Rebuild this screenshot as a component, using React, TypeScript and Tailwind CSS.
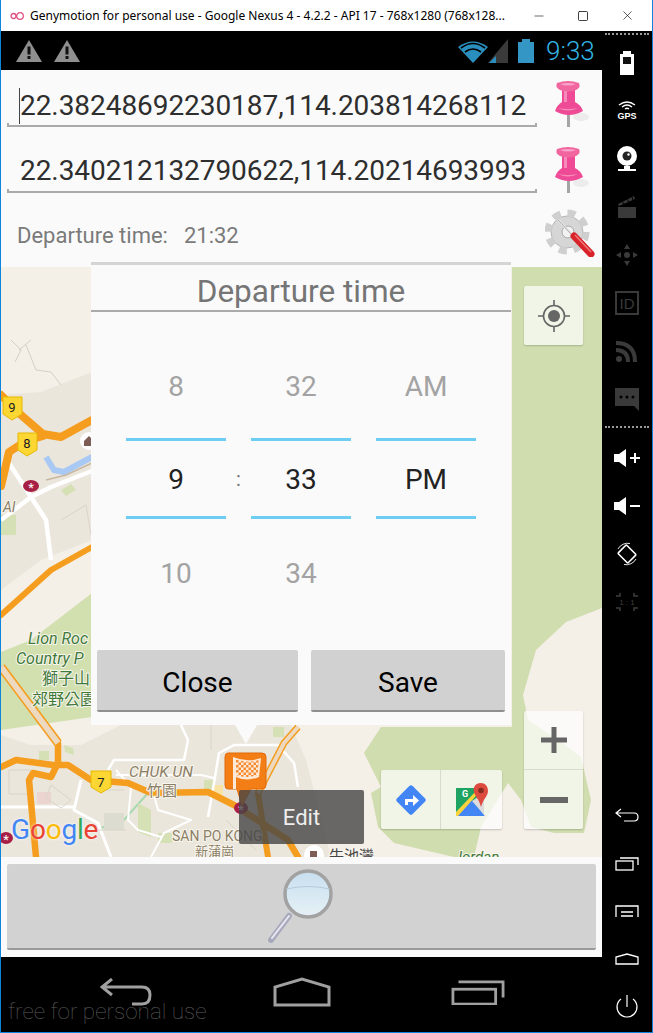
import { Minus, Square, X } from "lucide-react";

const ROBOTO = "font-['Roboto',sans-serif]";

function Warning({ className }: { className?: string }) {
  return (
    <svg viewBox="0 0 26 22" className={className}>
      <path d="M13 0 L26 22 H0 Z" fill="#8f8f8f" />
      <rect x="11.5" y="6.5" width="3" height="8" fill="#111" />
      <rect x="11.5" y="16" width="3" height="3" fill="#111" />
    </svg>
  );
}

function Pin() {
  return (
    <svg viewBox="0 0 40 50" className="w-[40px] h-[50px] shrink-0 blur-[0.4px]">
      <ellipse cx="28" cy="37" rx="8" ry="4" fill="#ececec" />
      <rect x="14" y="33" width="3" height="14" fill="#a5a5a5" />
      <path d="M9 10 H22 V22 Q28 25 30 31 Q16 39 2 31 Q4 25 9 22 Z" fill="#ee4a95" />
      <path d="M4 3 Q15 -1 26 3 Q28 8 23 10 Q15 13 7 10 Q2 8 4 3 Z" fill="#f2669f" />
      <path d="M7 4 Q15 2 23 4 Q15 7 7 4 Z" fill="#f8a3c8" />
      <path d="M11 11 H14 V22 H11 Z M5 28 Q15 33 25 28 Q15 30 5 28 Z" fill="#f68bb9" />
    </svg>
  );
}

function Gear() {
  return (
    <svg viewBox="0 0 50 50" className="w-[50px] h-[50px] blur-[0.4px]">
      <circle cx="22" cy="25" r="16" fill="#d6d6d6" stroke="#b5b5b5" />
      <circle cx="22" cy="25" r="19" fill="none" stroke="#cfcfcf" strokeWidth="7" strokeDasharray="8 6.9" />
      <circle cx="23" cy="25" r="6" fill="#f1f1f1" stroke="#aaa" />
      <path d="M13 13 L29 30" stroke="#e9e9e9" strokeWidth="2.5" />
      <path d="M13 13 L29 30" stroke="#8a8a8a" strokeWidth="0.7" />
      <path d="M29 29 L46 47" stroke="#d8232a" strokeWidth="7" strokeLinecap="round" />
      <path d="M30 28 L46 45" stroke="#f07a7a" strokeWidth="1.5" />
    </svg>
  );
}

function MapArt() {
  return (
    <svg viewBox="0 267 601 590" className="w-[601px] h-[590px] block">
      <defs>
        <pattern id="checker" width="5" height="5" patternUnits="userSpaceOnUse">
          <rect width="2.5" height="2.5" fill="#f58a2e" />
          <rect x="2.5" y="2.5" width="2.5" height="2.5" fill="#f58a2e" />
        </pattern>
      </defs>
      <rect x="0" y="267" width="601" height="590" fill="#f4efe7" />
      {/* parks */}
      <path d="M511 267 H601 V608 L565 622 L535 650 L522 695 L527 720 L553 737 L580 757 L590 800 L583 833 L553 833 L530 827 L520 800 L507 783 L480 827 L473 857 H453 L393 843 L377 827 L370 793 L380 787 L363 753 L380 727 H511 Z" fill="#d0ddaf" />
      <path d="M0 652 L30 640 L91 593 V717 L0 730 Z" fill="#d2e0b0" />
      {/* built up land */}
      <path d="M0 395 L40 392 L91 372 V540 L40 560 L0 590 Z" fill="#ebe6dc" />
      <path d="M0 735 L30 745 H80 L120 725 H290 L305 760 L330 857 H0 Z" fill="#ebe6dc" />
      <path d="M10 340 L20 350 L14 362 M25 345 L35 370 L50 372 L60 385 M30 340 L18 350" fill="none" stroke="#d5d0c6" />
      <path d="M45 457 L53 470 L63 472 L91 457" fill="none" stroke="#a9c9f5" strokeWidth="6" />
      <path d="M45 480 L65 475 L91 463" fill="none" stroke="#c8b7a0" strokeWidth="1.5" />
      <path d="M100 828 L123 820 L147 793" fill="none" stroke="#a8d8b0" strokeWidth="2" />
      <g fill="#d5e0b5">
        <path d="M38 751 h10 v9 h-10 Z M63 745 L72 748 L73 755 L64 752 Z M272 727 h11 v10 h-11 Z" />
        <path d="M137 803 L150 810 L150 837 L137 832 Z M157 833 h14 v10 h-14 Z M203 780 h9 v10 h-9 Z M60 490 l10 -6 l5 6 l-10 6 Z M0 515 h15 v20 h-15 Z" />
      </g>
      <path d="M213 785 h9 v10 h-9 Z" fill="#f8e2a6" />
      <path d="M36 792 h14 v12 h-14 Z" fill="#ecd5d0" />
      <path d="M103 813 h20 v17 h-20 Z" fill="#dcdcd0" />
      {/* white streets */}
      <g fill="none" stroke="#fff" strokeWidth="4.5" strokeLinejoin="round">
        <path d="M8 463 L30 497 L50 487 L91 471" />
        <path d="M0 520 L30 497 L45 520 L50 560" />
        <path d="M0 807 H73 M80 780 L73 810 L97 823 L110 857" strokeWidth="3" />
        <path d="M107 770 L113 760 H183 L187 740 L180 725" strokeWidth="2.5" />
        <path d="M115 775 H200 L213 778 M115 770 L130 787 L127 820 L137 830 L160 837" strokeWidth="2" />
        <path d="M207 817 L213 783 L218 753 L233 745 H277 L293 763 L297 787" strokeWidth="2.5" />
        <path d="M153 795 L157 810 L190 820 L163 833 L150 857" strokeWidth="2" />
      </g>
      <g fill="none" stroke="#d9d4c9">
        <path d="M8 770 h22 v24 h-22 Z M50 785 l20 15 l-10 8 l-15 -10 Z M95 790 h28 M95 830 h30 M225 820 l30 30 M210 725 v25 M60 520 l25 -15 l5 30" />
      </g>
      {/* expressways */}
      <g fill="none" stroke="#f59d1e" strokeLinejoin="round" strokeLinecap="round">
        <path d="M0 395 L20 415 L42 434 L60 437 L91 420" strokeWidth="8" />
        <path d="M0 486 L8 452 L25 441 L42 436" strokeWidth="8" />
        <path d="M91 547 L50 570 L0 615" strokeWidth="6" />
        <path d="M0 767 L15 760 L52 765 L67 765 L90 780 L127 783 L150 793 L207 792 L233 805 L287 840 L297 857" strokeWidth="6.5" />
        <path d="M57 743 L57 763 L50 777 L32 773 L28 780 L35 857" strokeWidth="6.5" />
        <path d="M257 793 L267 857" strokeWidth="6" />
      </g>
      <g fill="none" strokeLinejoin="round">
        <path d="M0 667 L57 743" stroke="#f59d1e" strokeWidth="9" />
        <path d="M0 667 L57 743" stroke="#ecd9c0" strokeWidth="6" />
        <path d="M297 727 L283 743 L257 793" stroke="#f59d1e" strokeWidth="7" />
        <path d="M297 727 L283 743 L257 793" stroke="#ecd9c0" strokeWidth="4" />
      </g>
      {/* shields */}
      <g stroke="#e6b800" strokeWidth="1" fill="#fcd734">
        <path d="M2 397 H21 V414 L11 420 L2 414 Z" />
        <path d="M17 433 H36 V450 L26 456 L17 450 Z" />
        <path d="M90 771 H110 V787 L100 793 L90 787 Z" />
      </g>
      <g className="font-['Roboto',sans-serif]" fontSize="13" fill="#222" textAnchor="middle">
        <text x="11" y="412">9</text>
        <text x="26" y="448">8</text>
        <text x="100" y="787">7</text>
      </g>
      {/* stations */}
      <g fill="#a81f45">
        <ellipse cx="30" cy="486" rx="8" ry="6" />
        <ellipse cx="5" cy="838" rx="7" ry="6" />
        <ellipse cx="240" cy="808" rx="7" ry="6" />
      </g>
      <g className="font-['Roboto',sans-serif]" fill="#fff" fontSize="13" textAnchor="middle">
        <text x="30" y="492">*</text>
        <text x="5" y="844">*</text>
        <text x="240" y="814">*</text>
      </g>
      <circle cx="88" cy="441" r="9" fill="#fff" />
      <path d="M83 441 L88 436 L93 441 V446 H83 Z" fill="#7d5d55" />
      {/* labels */}
      <g className="font-['Roboto','Noto_Sans_CJK_TC',sans-serif]" stroke="#f8f5ee" strokeWidth="2" paintOrder="stroke">
        <text x="27" y="644" fontSize="16" fontStyle="italic" fill="#3f7a3a">Lion Roc</text>
        <text x="15" y="664" fontSize="16" fontStyle="italic" fill="#3f7a3a">Country P</text>
        <text x="41" y="684" fontSize="16" fill="#3f7a3a">獅子山</text>
        <text x="31" y="705" fontSize="16" fill="#3f7a3a">郊野公園</text>
        <text x="2" y="512" fontSize="14" fontStyle="italic" fill="#8c7f66">AI</text>
        <text x="128" y="777" fontSize="15.5" fontStyle="italic" fill="#8c7f66">CHUK UN</text>
        <text x="146" y="796" fontSize="15" fill="#8c7f66">竹園</text>
        <text x="171" y="841" fontSize="14" fill="#8c7f66">SAN PO KONG</text>
        <text x="194" y="856" fontSize="13" fill="#8c7f66">新蒲崗</text>
        <text x="328" y="861" fontSize="15" fill="#444">牛池灣</text>
        <text x="453" y="862" fontSize="15" fontStyle="italic" fill="#3f7a3a">Jordan</text>
      </g>
      <circle cx="313" cy="855" r="10" fill="#fff" />
      <rect x="309" y="851" width="7" height="6" fill="#7d5d55" />
      {/* tip of the selected marker bubble */}
      <path d="M234 725 H256 L245 744 Z" fill="#fafafa" />
      <path d="M227 753 H261 Q265 753 265 757 V785 Q265 789 261 789 H250 L241 806 L236 789 H227 Q224 789 224 785 V757 Q224 753 227 753 Z" fill="#f47e16" stroke="#e06a0a" />
      <path d="M232 757 Q246 763 260 758 L258 777 Q246 782 235 777 V789 H232 Z" fill="#fde9d6" />
      <path d="M235 759 Q246 764 258 760 L256.5 775 Q246 779 235 775 Z" fill="url(#checker)" />
    </svg>
  );
}

function MapOverlay() {
  return (
    <>
      <div className="absolute left-[523px] top-[19px] w-[59px] h-[59px] rounded-[2px] bg-white/70 shadow-[0_1px_2px_rgba(0,0,0,0.2)] flex items-center justify-center">
        <svg viewBox="0 0 34 34" className="w-[34px] h-[34px]" fill="none" stroke="#666" strokeWidth="1.6">
          <circle cx="17" cy="17" r="10.5" />
          <circle cx="17" cy="17" r="6" fill="#666" stroke="none" />
          <path d="M17 1 V7 M17 27 V33 M1 17 H7 M27 17 H33" />
        </svg>
      </div>

      <div className="absolute left-[523px] top-[444px] w-[59px] h-[118px] rounded-[2px] bg-white/70 shadow-[0_1px_2px_rgba(0,0,0,0.2)] flex flex-col">
        <div className="h-[59px] border-b border-[#d9d9d0] flex items-center justify-center">
          <svg viewBox="0 0 28 28" className="w-[28px] h-[28px]"><path d="M11.5 1 H16.5 V11.5 H27 V16.5 H16.5 V27 H11.5 V16.5 H1 V11.5 H11.5 Z" fill="#666" /></svg>
        </div>
        <div className="h-[59px] flex items-center justify-center">
          <svg viewBox="0 0 28 6" className="w-[28px] h-[6px]"><rect width="28" height="6" fill="#666" /></svg>
        </div>
      </div>

      <div className="absolute left-[380px] top-[503px] w-[121px] h-[59px] rounded-[2px] bg-white/70 shadow-[0_1px_2px_rgba(0,0,0,0.2)] flex">
        <div className="w-[60px] border-r border-[#d9d9d0] flex items-center justify-center">
          <svg viewBox="0 0 32 32" className="w-[32px] h-[32px]">
            <rect x="5" y="5" width="22" height="22" rx="2" transform="rotate(45 16 16)" fill="#4285f4" />
            <path d="M10 21 V15 H18 V11 L24 16.5 L18 22 V18 H13 V21 Z" fill="#fff" />
          </svg>
        </div>
        <div className="flex-1 flex items-center justify-center">
          <svg viewBox="0 0 34 34" className="w-[34px] h-[34px]">
            <path d="M1 5 H26 V33 H1 Z" fill="#1ea362" />
            <path d="M1 33 L17 17 L30 33 Z" fill="#4285f4" />
            <path d="M1 33 V29 L24 5 H28 L3 33 Z" fill="#fbd33c" />
            <path d="M17 18 L30 33 H29 V10 Z" fill="#dcdcdc" />
            <path d="M26 0 C19 0 18 6 19 9 C20 13 24 16 26 24 C28 16 33 13 33 8 C33 3 30 0 26 0 Z" fill="#dd4b3e" />
            <circle cx="26" cy="7.5" r="2.8" fill="#862a20" />
            <text x="7" y="14" fontSize="9" fill="#fff" className="font-['Roboto',sans-serif]" fontWeight="700">G</text>
          </svg>
        </div>
      </div>

      <div className={`absolute left-[10px] top-[547px] text-[28px] leading-[32px] font-normal tracking-[-0.2px] ${ROBOTO} [text-shadow:0_0_3px_#fff]`}>
        <span className="text-[#4285f4]">G</span>
        <span className="text-[#ea4335]">o</span>
        <span className="text-[#fbbc05]">o</span>
        <span className="text-[#4285f4]">g</span>
        <span className="text-[#34a853]">l</span>
        <span className="text-[#ea4335]">e</span>
      </div>

      <div className={`absolute left-[238px] top-[523px] w-[125px] h-[54px] rounded-[2px] bg-[#454545]/80 flex items-center justify-center text-[22px] text-[#eeeeee] ${ROBOTO}`}>
        Edit
      </div>
    </>
  );
}

function Wheel({ top, mid, bottom }: { top: string; mid: string; bottom?: string }) {
  return (
    <div className="w-[100px] flex flex-col items-center text-[28px]">
      <div className="h-[107px] w-full flex items-center justify-center text-[#a3a3a3] pt-[5px]">{top}</div>
      <div className="h-[81px] w-full border-y-[3px] border-[#6dcdf2] flex items-center justify-center text-[#222] pt-[2px]">{mid}</div>
      <div className="h-[107px] w-full flex items-center justify-center text-[#a3a3a3] pt-[2px]">{bottom}</div>
    </div>
  );
}

function TimeDialog() {
  return (
    <div className={`absolute left-[90px] top-[231px] w-[420px] h-[463px] bg-[#fafafa] border-t-[3px] border-[#d4d4d4] flex flex-col ${ROBOTO}`}>
      <div className="h-[47px] border-b-2 border-[#aaaaaa] flex items-center justify-center pt-[8px] text-[31.5px] text-[#757575]">
        Departure time
      </div>
      <div className="h-[295px] mt-[19px] ml-[35px] flex items-start gap-[25px] relative">
        <Wheel top="8" mid="9" bottom="10" />
        <Wheel top="32" mid="33" bottom="34" />
        <Wheel top="AM" mid="PM" />
        <span className="absolute left-[110px] top-[133px] text-[20px] text-[#777]">:</span>
      </div>
      <div className="flex gap-[13px] ml-[6px] mt-[24px]">
        <button className="w-[201px] h-[62px] pt-[5px] bg-[#d1d1d1] rounded-[2px] border-b-2 border-[#8f8f8f] text-[28px] text-black">Close</button>
        <button className="w-[194px] h-[62px] pt-[5px] bg-[#d1d1d1] rounded-[2px] border-b-2 border-[#8f8f8f] text-[28px] text-black">Save</button>
      </div>
    </div>
  );
}

function Magnifier() {
  return (
    <svg viewBox="0 0 70 78" className="w-[70px] h-[78px] blur-[0.4px]">
      <defs>
        <linearGradient id="glass" x1="0" x2="0" y1="0" y2="1">
          <stop offset="0" stopColor="#c8dff0" />
          <stop offset="1" stopColor="#e6f1f5" />
        </linearGradient>
      </defs>
      <path d="M22 49 L4 73" stroke="#a9a9bd" strokeWidth="6" strokeLinecap="round" fill="none" />
      <path d="M22 49 L5 71" stroke="#e8e8f0" strokeWidth="2" strokeLinecap="round" fill="none" />
      <ellipse cx="41" cy="27" rx="23" ry="23" fill="url(#glass)" stroke="#a2a2a2" strokeWidth="3.5" />
      <path d="M19 22 Q41 17 63 22" fill="none" stroke="#b5cbdb" strokeWidth="1" />
    </svg>
  );
}

function Toolbar() {
  const slot = "h-12 flex items-center justify-center shrink-0";
  const dots = "h-[2px] mx-[3px] border-t-2 border-dotted border-[#999] shrink-0";
  return (
    <div className="w-[50px] bg-black flex flex-col pt-[2px]">
      <div className={dots} />
      <div className="h-[4px] shrink-0" />
      <div className={slot}>
        <svg viewBox="0 0 20 24" className="w-[20px] h-[24px]"><path d="M3 3 H6 V0 H14 V3 H17 V24 H3 Z" fill="#fff" /><rect x="6" y="6" width="8" height="7" fill="#111" /></svg>
      </div>
      <div className={slot}>
        <div className="flex flex-col items-center">
          <svg viewBox="0 0 18 10" className="w-[18px] h-[10px]" fill="none" stroke="#fff" strokeWidth="1.3"><path d="M1 4 Q9 -2 17 4 M4 6 Q9 2 14 6 M7 8 Q9 6.5 11 8" /></svg>
          <span className="text-[9px] leading-[10px] font-bold text-white font-['Liberation_Sans',sans-serif]">GPS</span>
        </div>
      </div>
      <div className={slot}>
        <svg viewBox="0 0 22 26" className="w-[22px] h-[26px]"><circle cx="11" cy="10" r="10" fill="#fff" /><circle cx="11" cy="10" r="4.5" fill="#222" /><circle cx="12.5" cy="8.5" r="1.2" fill="#fff" /><path d="M8 20 H14 V23 H20 V25 H2 V23 H8 Z" fill="#fff" /></svg>
      </div>
      <div className={slot}>
        <svg viewBox="0 0 20 22" className="w-[20px] h-[22px]"><path d="M1 8 L17 0 L18 3 L2 10 Z M1 11 H19 V22 H1 Z" fill="#3a3a3a" /><path d="M5 5 L7 8 M10 3 L12 6 M15 1 L16 4" stroke="#000" /></svg>
      </div>
      <div className={slot}>
        <svg viewBox="0 0 24 24" className="w-[24px] h-[24px]" fill="#3a3a3a"><path d="M12 1 L15 6 H9 Z M12 23 L9 18 H15 Z M1 12 L6 9 V15 Z M23 12 L18 15 V9 Z" /><circle cx="12" cy="12" r="3" /></svg>
      </div>
      <div className={slot}>
        <div className="w-[24px] h-[24px] border-2 border-[#3a3a3a] flex items-center justify-center text-[#3a3a3a] text-[15px] leading-none font-['Liberation_Sans',sans-serif]">ID</div>
      </div>
      <div className={slot}>
        <svg viewBox="0 0 22 22" className="w-[22px] h-[22px]" fill="none" stroke="#3a3a3a" strokeWidth="4"><path d="M0 3 Q19 3 19 22 M0 10 Q12 10 12 22" /><circle cx="3" cy="19" r="3" fill="#3a3a3a" stroke="none" /></svg>
      </div>
      <div className={slot}>
        <svg viewBox="0 0 24 24" className="w-[24px] h-[24px]"><path d="M0 1 H24 V24 L19 19 H0 Z" fill="#3a3a3a" /><g fill="#000"><circle cx="6" cy="10" r="1.5" /><circle cx="12" cy="10" r="1.5" /><circle cx="18" cy="10" r="1.5" /></g></svg>
      </div>
      <div className="h-[3px] shrink-0" />
      <div className={dots} />
      <div className="h-[6px] shrink-0" />
      <div className={slot}>
        <svg viewBox="0 0 26 18" className="w-[26px] h-[18px]"><path d="M0 5 H5 L12 0 V18 L5 13 H0 Z M16 8 H20 V4 H22 V8 H26 V10 H22 V14 H20 V10 H16 Z" fill="#fff" /></svg>
      </div>
      <div className={slot}>
        <svg viewBox="0 0 26 18" className="w-[26px] h-[18px]"><path d="M0 5 H5 L12 0 V18 L5 13 H0 Z M16 8 H26 V10 H16 Z" fill="#fff" /></svg>
      </div>
      <div className={slot}>
        <svg viewBox="0 0 24 24" className="w-[24px] h-[24px]" fill="none" stroke="#fff"><rect x="6" y="5" width="12" height="14" rx="1" transform="rotate(-45 12 12)" strokeWidth="1.6" /><path d="M3 7 A11 11 0 0 1 15 1.5 M21 17 A11 11 0 0 1 9 22.5" strokeWidth="0.9" /></svg>
      </div>
      <div className={slot}>
        <svg viewBox="0 0 24 20" className="w-[24px] h-[20px]" fill="none" stroke="#3e3e3e" strokeWidth="1.5"><path d="M1 4 H5 V1 M23 4 H19 V1 M1 16 H5 V19 M23 16 H19 V19" /><text x="12" y="13" fontSize="8" textAnchor="middle" fill="#3e3e3e" stroke="none" className="font-['Liberation_Sans',sans-serif]">1 : 1</text></svg>
      </div>
      <div className="mt-auto" />
      <div className={slot}>
        <svg viewBox="0 0 24 14" className="w-[24px] h-[14px]" fill="none" stroke="#fff" strokeWidth="1.2"><path d="M6 1 L1 5 L6 9 M1 5 H19 Q23 5 23 9 Q23 13 19 13 H9" /></svg>
      </div>
      <div className={slot}>
        <svg viewBox="0 0 24 15" className="w-[24px] h-[15px]" fill="none" stroke="#fff" strokeWidth="1.3"><rect x="1" y="5" width="17" height="9" /><path d="M5 2 H23 V9" /></svg>
      </div>
      <div className={slot}>
        <svg viewBox="0 0 24 12" className="w-[24px] h-[12px]" fill="none" stroke="#fff" strokeWidth="1.3"><path d="M1 12 V1 H23 V12 M6 7 H18 M6 11 H18" /></svg>
      </div>
      <div className={slot}>
        <svg viewBox="0 0 24 12" className="w-[24px] h-[12px]" fill="none" stroke="#fff" strokeWidth="1.3"><path d="M1 11 H23 V4 L12 1 L1 4 Z" /></svg>
      </div>
      <div className={slot}>
        <svg viewBox="0 0 24 24" className="w-[24px] h-[24px]" fill="none" stroke="#fff" strokeWidth="1.2"><path d="M12 0 V12 M6 4 A10 10 0 1 0 18 4" /></svg>
      </div>
      <div className="h-[1px] shrink-0" />
    </div>
  );
}

export default function App() {
  return (
    <div className="w-[653px] h-[1033px] overflow-hidden flex flex-col border border-t-0 border-[#0f84dc] bg-white">
      <div className="h-[31px] shrink-0 flex items-center bg-white font-['Noto_Sans',sans-serif] text-[12px] text-black">
        <svg viewBox="0 0 14 10" className="ml-[9px] w-[14px] h-[10px]" fill="none" stroke="#e0507f" strokeWidth="1.3"><circle cx="3.5" cy="5" r="2.5" /><circle cx="10" cy="5" r="3.3" /></svg>
        <span className="ml-[6px] w-[482px] whitespace-nowrap">Genymotion for personal use - Google Nexus 4 - 4.2.2 - API 17 - 768x1280 (768x128...</span>
        <Minus className="ml-[20px] w-[14px] h-[14px] text-black" strokeWidth={1} />
        <Square className="ml-[31px] w-[12px] h-[12px] text-black" strokeWidth={1.5} />
        <X className="ml-[31px] w-[15px] h-[15px] text-black" strokeWidth={1} />
      </div>

      <div className="flex-1 flex min-h-0">
        <div className="w-[601px] flex flex-col relative">
          {/* status bar */}
          <div className="h-[39px] shrink-0 bg-black flex items-center">
            <Warning className="ml-[15px] w-[26px] h-[22px]" />
            <Warning className="ml-[12px] w-[26px] h-[22px]" />
            <svg viewBox="0 0 50 24" className="ml-[378px] w-[50px] h-[24px]">
              <path d="M15 24 L0 8 Q15 -3 30 8 Z" fill="#2a8fbe" />
              <path d="M3 9 Q15 0 27 9 M7 13 Q15 7 23 13" stroke="#000" strokeWidth="1.6" fill="none" />
              <path d="M50 0 V24 H30 Z" fill="#3a3a3a" />
              <path d="M31 24 L38 17 V24 Z" fill="#2a8fbe" />
            </svg>
            <svg viewBox="0 0 16 24" className="ml-[10px] w-[16px] h-[24px]"><path d="M0 3 H4 V0 H12 V3 H16 V24 H0 Z" fill="#3496c4" /></svg>
            <span className={`ml-[12px] text-[26px] leading-none font-light text-[#33b5e5] ${ROBOTO}`}>9:33</span>
          </div>

          {/* route form */}
          <div className={`h-[197px] shrink-0 bg-[#fafafa] flex flex-col ${ROBOTO}`}>
            <div className="flex items-start pl-[6px] pt-[1px] gap-[16px]">
              <div className="w-[530px] h-[56px] flex flex-col">
                <div className="h-[52px] flex items-center pl-[13px] pt-[18px] text-[28px] leading-[36px] tracking-[-0.06px] text-[#2e2e2e] whitespace-nowrap">
                  <span className="border-l border-[#444] -ml-[1px]">22.38248692230187,114.203814268112</span>
                </div>
                <div className="h-[5px] border-x-2 border-b-2 border-[#aaaaaa]" />
              </div>
              <div className="mt-[9px]"><Pin /></div>
            </div>
            <div className="flex items-start pl-[6px] mt-[7px] gap-[16px]">
              <div className="w-[530px] h-[56px] flex flex-col">
                <div className="h-[52px] flex items-center pl-[13px] pt-[16px] text-[28px] leading-[36px] tracking-[-0.06px] text-[#2e2e2e] whitespace-nowrap">
                  22.340212132790622,114.20214693993
                </div>
                <div className="h-[5px] border-x-2 border-b-2 border-[#aaaaaa]" />
              </div>
              <div className="mt-[9px]"><Pin /></div>
            </div>
            <div className="flex items-center pl-[16px] mt-[11px] text-[22px] text-[#7a7a7a]">
              <span className="pt-[6px]">Departure time:</span>
              <span className="ml-[16px] pt-[6px]">21:32</span>
              <div className="ml-[306px]"><Gear /></div>
            </div>
          </div>

          {/* map */}
          <div className="h-[590px] shrink-0 relative overflow-hidden">
            <MapArt />
            <MapOverlay />
          </div>

          {/* search */}
          <div className="h-[100px] shrink-0 bg-[#fafafa] pl-[6px] pt-[7px]">
            <button className="w-[589px] h-[86px] bg-[#d2d2d2] rounded-[2px] border-b-2 border-[#9a9a9a] flex items-center justify-center">
              <Magnifier />
            </button>
          </div>

          {/* nav bar */}
          <div className="flex-1 bg-black flex items-center relative">
            <svg viewBox="0 0 52 28" className="ml-[99px] w-[52px] h-[28px] -mt-[6px]" fill="none" stroke="#a0a0a0" strokeWidth="3"><path d="M12 1 L2 9 L12 17 M2 9 H42 Q50 9 50 17 Q50 26 42 26 H32" /></svg>
            <svg viewBox="0 0 58 30" className="ml-[121px] w-[58px] h-[30px] -mt-[6px]" fill="none" stroke="#a0a0a0" strokeWidth="3"><path d="M2 28 H56 V10 L29 2 L2 10 Z" /></svg>
            <svg viewBox="0 0 58 28" className="ml-[120px] w-[54px] h-[26px] -mt-[6px]" fill="none" stroke="#a0a0a0" strokeWidth="3"><rect x="2" y="11" width="46" height="16" /><path d="M8 3 H56 V20" /></svg>
            <span className={`absolute left-[7px] bottom-[5px] text-[22.5px] leading-[32px] font-thin text-[#5c5c5c] ${ROBOTO}`}>free for personal use</span>
          </div>

          <TimeDialog />
        </div>
        <Toolbar />
      </div>
    </div>
  );
}
